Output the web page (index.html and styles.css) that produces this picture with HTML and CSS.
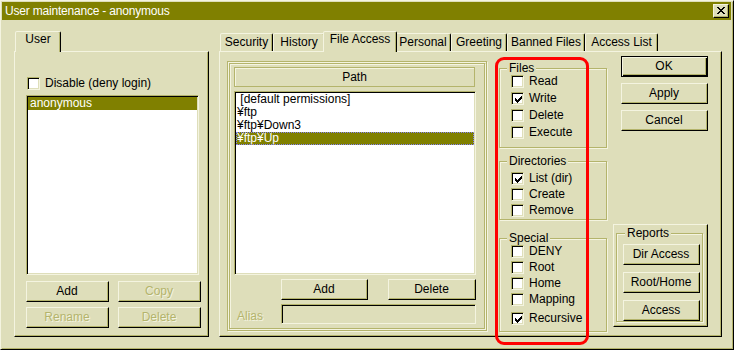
FILE: index.html
```html
<!DOCTYPE html>
<html>
<head>
<meta charset="utf-8">
<link rel="stylesheet" href="styles.css">
</head>
<body>
<div class="window">
  <div class="titlebar">
    <span class="title">User maintenance - anonymous</span>
    <div class="close"><svg width="8" height="7" viewBox="0 0 8 7" shape-rendering="crispEdges"><path d="M0 0h2v1h-2z M6 0h2v1h-2z M1 1h2v1h-2z M5 1h2v1h-2z M2 2h4v1h-4z M3 3h2v1h-2z M2 4h4v1h-4z M1 5h2v1h-2z M5 5h2v1h-2z M0 6h2v1h-2z M6 6h2v1h-2z" fill="#000"/></svg></div>
  </div>
  <div class="client">
    <div class="tabctl tabctl-left">
      <div class="tabs tabs-left">
        <div class="tab sel tab-user">User</div>
      </div>
      <div class="panel user-panel">
        <div class="row row-disable"><span class="box"></span><span class="lbl">Disable (deny login)</span></div>
        <div class="listbox users">
          <div class="item sel">anonymous</div>
        </div>
        <div class="btn-grid">
          <button class="btn">Add</button>
          <button class="btn dis">Copy</button>
          <button class="btn dis">Rename</button>
          <button class="btn dis">Delete</button>
        </div>
      </div>
    </div>
    <div class="tabctl tabctl-right">
      <div class="tabs tabs-right">
        <div class="tab t-sec">Security</div>
        <div class="tab t-his">History</div>
        <div class="tab sel t-fa">File Access</div>
        <div class="tab t-per">Personal</div>
        <div class="tab t-gre">Greeting</div>
        <div class="tab t-ban">Banned Files</div>
        <div class="tab t-acc">Access List</div>
      </div>
      <div class="panel access-panel">
        <div class="path-frame">
          <div class="path-inner">
            <div class="path-head">Path</div>
            <div class="listbox paths">
              <div class="item">&nbsp;[default permissions]</div>
              <div class="item">¥ftp</div>
              <div class="item">¥ftp¥Down3</div>
              <div class="item sel focus">¥ftp¥Up</div>
            </div>
            <div class="path-btns">
              <button class="btn btn-padd">Add</button>
              <button class="btn btn-pdel">Delete</button>
            </div>
            <div class="alias-row">
              <span class="alias-label">Alias</span>
              <div class="alias-field"></div>
            </div>
          </div>
        </div>
        <div class="groups">
          <div class="group g-files">
            <span class="glabel">Files</span>
            <div class="row"><span class="box"></span><span class="lbl">Read</span></div>
            <div class="row"><span class="box"><svg width="7" height="7" viewBox="0 0 7 7" shape-rendering="crispEdges"><path d="M6 0h1v1h-1z M5 1h2v1h-2z M0 2h1v1h-1z M4 2h3v1h-3z M0 3h2v1h-2z M3 3h3v1h-3z M0 4h5v1h-5z M1 5h3v1h-3z M2 6h1v1h-1z" fill="#000"/></svg></span><span class="lbl">Write</span></div>
            <div class="row"><span class="box"></span><span class="lbl">Delete</span></div>
            <div class="row"><span class="box"></span><span class="lbl">Execute</span></div>
          </div>
          <div class="group g-dirs">
            <span class="glabel">Directories</span>
            <div class="row"><span class="box"><svg width="7" height="7" viewBox="0 0 7 7" shape-rendering="crispEdges"><path d="M6 0h1v1h-1z M5 1h2v1h-2z M0 2h1v1h-1z M4 2h3v1h-3z M0 3h2v1h-2z M3 3h3v1h-3z M0 4h5v1h-5z M1 5h3v1h-3z M2 6h1v1h-1z" fill="#000"/></svg></span><span class="lbl">List (dir)</span></div>
            <div class="row"><span class="box"></span><span class="lbl">Create</span></div>
            <div class="row"><span class="box"></span><span class="lbl">Remove</span></div>
          </div>
          <div class="group g-special">
            <span class="glabel">Special</span>
            <div class="row"><span class="box"></span><span class="lbl">DENY</span></div>
            <div class="row"><span class="box"></span><span class="lbl">Root</span></div>
            <div class="row"><span class="box"></span><span class="lbl">Home</span></div>
            <div class="row"><span class="box"></span><span class="lbl">Mapping</span></div>
            <div class="row row-last"><span class="box"><svg width="7" height="7" viewBox="0 0 7 7" shape-rendering="crispEdges"><path d="M6 0h1v1h-1z M5 1h2v1h-2z M0 2h1v1h-1z M4 2h3v1h-3z M0 3h2v1h-2z M3 3h3v1h-3z M0 4h5v1h-5z M1 5h3v1h-3z M2 6h1v1h-1z" fill="#000"/></svg></span><span class="lbl">Recursive</span></div>
          </div>
        </div>
        <div class="side">
          <button class="btn side-btn default">OK</button>
          <button class="btn side-btn">Apply</button>
          <button class="btn side-btn">Cancel</button>
          <div class="reports-box">
            <div class="group g-reports">
              <span class="glabel">Reports</span>
              <button class="btn rep-btn">Dir Access</button>
              <button class="btn rep-btn">Root/Home</button>
              <button class="btn rep-btn">Access</button>
            </div>
          </div>
        </div>
      </div>
    </div>
  </div>
</div>
<div class="annot"></div>
</body>
</html>
```

FILE: styles.css
```css
:root {
  --face: #DEDEBA;
  --light: #F4F4E0;
  --shadow: #B4B46C;
  --title: #808000;
}
* { box-sizing: border-box; }
html, body { margin: 0; padding: 0; }
body {
  width: 734px;
  height: 350px;
  background: var(--face);
  font: 12px "Liberation Sans", Arial, sans-serif;
  color: #000;
  overflow: hidden;
}
.window {
  width: 734px;
  height: 350px;
  border: 1px solid;
  border-color: var(--light) #000 #000 var(--light);
  box-shadow: inset 1px 1px 0 var(--face), inset -1px -1px 0 var(--shadow);
  padding: 1px;
  display: flex;
  flex-direction: column;
}
.titlebar {
  height: 18px;
  background: var(--title);
  color: #fff;
  display: flex;
  align-items: center;
  justify-content: space-between;
  padding: 0 2px 0 3px;
  margin-right: 1px;
}
.title { line-height: 14px; letter-spacing: -0.2px; }
.close {
  width: 16px;
  height: 14px;
  background: var(--face);
  border: 1px solid;
  border-color: var(--light) #000 #000 var(--light);
  box-shadow: inset -1px -1px 0 var(--shadow);
  display: flex;
  align-items: center;
  justify-content: center;
  padding: 0 1px 1px 0;
}
.close svg { display: block; }
.client {
  flex: 1;
  display: flex;
  gap: 10px;
  padding: 11px 0 0 12px;
}
.tabctl-left { width: 195px; }
.tabctl-right { width: 503px; }
.tabs {
  height: 20px;
  display: flex;
  align-items: flex-end;
}
.tabs-left { padding-left: 3px; }
.tabs-right { padding-left: 1px; }
.tab {
  height: 18px;
  border: 1px solid;
  border-bottom: none;
  border-color: var(--light) #000 transparent var(--light);
  box-shadow: inset -1px 0 0 var(--shadow);
  border-radius: 2px 2px 0 0;
  text-align: center;
  line-height: 16px;
  white-space: nowrap;
  background: var(--face);
}
.tab.sel {
  height: 21px;
  margin: 0 -2px -1px;
  position: relative;
  z-index: 1;
  line-height: 15px;
}
.tab-user { width: 46px; }
.t-sec { width: 53px; }
.t-his { width: 52px; }
.t-fa { width: 74px; }
.t-per { width: 56px; }
.t-gre { width: 56px; }
.t-ban { width: 78px; }
.t-acc { width: 73px; }
.panel {
  height: 286px;
  border: 1px solid;
  border-color: var(--light) #000 #000 var(--light);
  box-shadow: inset -1px -1px 0 var(--shadow);
}
/* left panel */
.user-panel {
  padding: 25px 0 0 11px;
}
.row {
  display: flex;
  align-items: flex-start;
  height: 16px;
}
.row-disable { height: 13px; margin-left: 1px; }
.box {
  width: 13px;
  height: 13px;
  flex: none;
  background: #fff;
  border: 1px solid;
  border-color: var(--shadow) var(--light) var(--light) var(--shadow);
  box-shadow: inset 1px 1px 0 #000, inset -1px -1px 0 var(--face);
  margin-right: 5px;
  display: flex;
  align-items: center;
  justify-content: center;
  padding: 1px 0 0 1px;
}
.box svg { display: block; }
.lbl { line-height: 13px; white-space: nowrap; }
.listbox {
  background: #fff;
  border: 1px solid;
  border-color: var(--shadow) var(--light) var(--light) var(--shadow);
  box-shadow: inset 1px 1px 0 #000, inset -1px -1px 0 var(--face);
  padding: 1px;
}
.users {
  width: 173px;
  height: 180px;
  margin-top: 5px;
}
.item {
  height: 13px;
  line-height: 13px;
  padding-left: 2px;
  white-space: nowrap;
}
.item.sel { background: var(--title); color: #fff; }
.item.focus { outline: 1px dotted #8080ff; outline-offset: -1px; }
.btn-grid {
  display: grid;
  grid-template-columns: 83px 83px;
  column-gap: 9px;
  row-gap: 5px;
  margin-top: 6px;
}
.btn {
  display: block;
  width: 83px;
  height: 21px;
  padding: 0 1px 1px 0;
  margin: 0;
  font: inherit;
  color: #000;
  background: var(--face);
  border: 1px solid;
  border-color: var(--light) #000 #000 var(--light);
  box-shadow: inset -1px -1px 0 var(--shadow);
  border-radius: 0;
  text-align: center;
  line-height: 18px;
}
.btn.dis { color: var(--shadow); text-shadow: 1px 1px 0 var(--light); }
.btn.default {
  border-color: #000;
  box-shadow: inset 1px 1px 0 var(--light), inset -1px -1px 0 #000, inset -2px -2px 0 var(--shadow);
}
/* right panel */
.access-panel {
  display: flex;
  align-items: flex-start;
  padding: 4px 0 0 7px;
}
.path-frame {
  width: 260px;
  height: 270px;
  margin-top: 5px;
  border: 1px solid var(--shadow);
  box-shadow: inset 1px 1px 0 var(--light), 1px 1px 0 var(--light);
  padding: 1px;
}
.path-inner {
  height: 100%;
  border: 1px solid var(--shadow);
  box-shadow: inset 1px 1px 0 var(--light), 1px 1px 0 var(--light);
  padding: 3px 0 0 4px;
}
.path-head {
  width: 241px;
  height: 20px;
  border: 1px solid var(--shadow);
  box-shadow: inset 1px 1px 0 var(--light);
  text-align: center;
  line-height: 18px;
}
.paths {
  width: 242px;
  height: 184px;
  margin-top: 4px;
}
.paths .item { padding-left: 1px; }
.path-btns {
  display: flex;
  gap: 20px;
  margin: 4px 0 0 47px;
}
.btn-padd { width: 87px; }
.btn-pdel { width: 88px; }
.alias-row {
  display: flex;
  align-items: flex-end;
  margin-top: 4px;
  height: 20px;
}
.alias-label {
  width: 47px;
  padding-left: 3px;
  line-height: 15px;
  color: var(--shadow);
  text-shadow: 1px 1px 0 var(--light);
}
.alias-field {
  width: 195px;
  height: 20px;
  border: 1px solid;
  border-color: var(--shadow) var(--light) var(--light) var(--shadow);
  box-shadow: inset 1px 1px 0 #000;
}
.groups {
  width: 108px;
  margin: 12px 0 0 12px;
}
.group {
  border: 1px solid var(--shadow);
  box-shadow: inset 1px 1px 0 var(--light), 1px 1px 0 var(--light);
  padding: 0 0 0 11px;
}
.glabel {
  display: table;
  margin: -7px 0 0 -4px;
  padding: 0 2px;
  line-height: 13px;
  background: var(--face);
}
.g-files { height: 80px; }
.g-files .row { margin-bottom: 1px; }
.g-dirs { height: 59px; margin-top: 13px; }
.g-dirs .glabel { margin-bottom: 4px; }
.g-special { height: 94px; margin-top: 18px; }
.g-special .row-last { margin-top: 3px; }
.side {
  width: 95px;
  margin-left: 6px;
  display: flex;
  flex-direction: column;
}
.side-btn { width: 87px; margin-left: 8px; margin-bottom: 6px; }
.reports-box {
  width: 95px;
  height: 103px;
  margin-top: 87px;
  border: 1px solid;
  border-color: var(--light) #000 #000 var(--light);
  box-shadow: inset -1px -1px 0 var(--shadow);
  padding: 8px 0 0 2px;
}
.g-reports {
  width: 87px;
  height: 89px;
  padding-left: 6px;
}
.g-reports .glabel { margin-left: 2px; margin-bottom: 4px; }
.rep-btn { width: 77px; margin-bottom: 7px; }
.annot {
  position: absolute;
  left: 495px;
  top: 57px;
  width: 94px;
  height: 288px;
  border: 3px solid #ff0000;
  border-radius: 9px;
}
```
